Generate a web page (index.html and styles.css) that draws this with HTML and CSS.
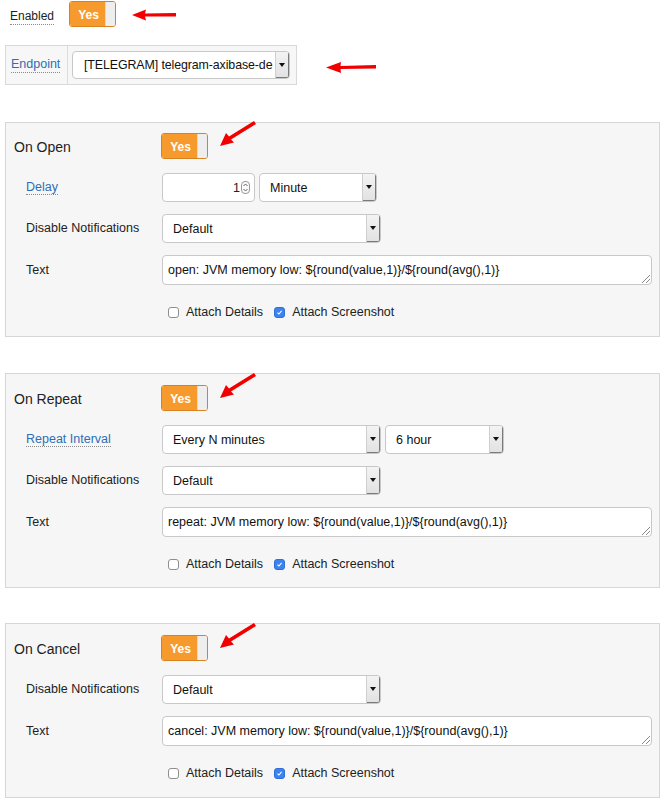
FILE: index.html
```html
<!DOCTYPE html>
<html>
<head>
<meta charset="utf-8">
<link rel="stylesheet" href="styles.css">
</head>
<body>
<div class="page">
  <div class="top-row">
    <span class="lbl-dotted">Enabled</span>
    <span class="toggle"><span class="toggle-on">Yes</span><span class="toggle-knob"></span></span>
    <svg class="arrow-left arrow-a" width="46" height="14" viewBox="0 0 46 14"><path d="M0 7 L14 1.5 L13 5.5 L44 5 L44 8.6 L13 8.6 L14 12.5 Z" fill="#f20000"/></svg>
  </div>

  <div class="endpoint-row">
    <div class="endpoint-box">
      <div class="endpoint-label"><span class="lbl-link">Endpoint</span></div>
      <div class="endpoint-ctrl">
        <div class="select w-endpoint"><span class="sel-text">[TELEGRAM] telegram-axibase-de</span><span class="sel-btn"><i></i></span></div>
      </div>
    </div>
    <svg class="arrow-left arrow-b" width="52" height="14" viewBox="0 0 52 14"><path d="M0 7.5 L15 2 L14.5 6 L50 5 L50 8.6 L14.5 9 L15 13 Z" fill="#f20000"/></svg>
  </div>

  <div class="section s-open">
    <div class="sec-head">
      <span class="sec-title">On Open</span>
      <span class="toggle"><span class="toggle-on">Yes</span><span class="toggle-knob"></span></span>
      <svg class="arrow-diag" width="40" height="30" viewBox="0 0 40 30"><path d="M1 26 L7 13 L10 16.5 L35 1 L37 4 L12 19.5 L15 22.5 Z" fill="#f20000"/></svg>
    </div>
    <div class="row first">
      <span class="row-label"><span class="lbl-link">Delay</span></span>
      <div class="ctrls">
        <div class="numinput"><span class="num">1</span><span class="spin"><svg width="7" height="11" viewBox="0 0 7 11"><path d="M1.5 4 L3.5 2 L5.5 4 M1.5 7 L3.5 9 L5.5 7" fill="none" stroke="#555" stroke-width="0.9"/></svg></span></div>
        <div class="select w-minute"><span class="sel-text">Minute</span><span class="sel-btn"><i></i></span></div>
      </div>
    </div>
    <div class="row">
      <span class="row-label">Disable Notifications</span>
      <div class="ctrls"><div class="select w-default"><span class="sel-text">Default</span><span class="sel-btn"><i></i></span></div></div>
    </div>
    <div class="row">
      <span class="row-label">Text</span>
      <div class="ctrls"><div class="textarea">open: JVM memory low: ${round(value,1)}/${round(avg(),1)}<span class="grip"></span></div></div>
    </div>
    <div class="check-row">
      <span class="cb"></span><span class="cb-label">Attach Details</span>
      <span class="cb checked"><svg width="12" height="12" viewBox="0 0 12 12"><path d="M3.3 6.2 L5.2 8.1 L8.8 3.8" fill="none" stroke="#fff" stroke-width="1.4"/></svg></span><span class="cb-label">Attach Screenshot</span>
    </div>
  </div>

  <div class="section s-repeat">
    <div class="sec-head">
      <span class="sec-title">On Repeat</span>
      <span class="toggle"><span class="toggle-on">Yes</span><span class="toggle-knob"></span></span>
      <svg class="arrow-diag" width="40" height="30" viewBox="0 0 40 30"><path d="M1 26 L7 13 L10 16.5 L35 1 L37 4 L12 19.5 L15 22.5 Z" fill="#f20000"/></svg>
    </div>
    <div class="row first">
      <span class="row-label"><span class="lbl-link">Repeat Interval</span></span>
      <div class="ctrls">
        <div class="select w-default"><span class="sel-text">Every N minutes</span><span class="sel-btn"><i></i></span></div>
        <div class="select w-hour"><span class="sel-text">6 hour</span><span class="sel-btn"><i></i></span></div>
      </div>
    </div>
    <div class="row">
      <span class="row-label">Disable Notifications</span>
      <div class="ctrls"><div class="select w-default"><span class="sel-text">Default</span><span class="sel-btn"><i></i></span></div></div>
    </div>
    <div class="row">
      <span class="row-label">Text</span>
      <div class="ctrls"><div class="textarea">repeat: JVM memory low: ${round(value,1)}/${round(avg(),1)}<span class="grip"></span></div></div>
    </div>
    <div class="check-row">
      <span class="cb"></span><span class="cb-label">Attach Details</span>
      <span class="cb checked"><svg width="12" height="12" viewBox="0 0 12 12"><path d="M3.3 6.2 L5.2 8.1 L8.8 3.8" fill="none" stroke="#fff" stroke-width="1.4"/></svg></span><span class="cb-label">Attach Screenshot</span>
    </div>
  </div>

  <div class="section s-cancel">
    <div class="sec-head">
      <span class="sec-title">On Cancel</span>
      <span class="toggle"><span class="toggle-on">Yes</span><span class="toggle-knob"></span></span>
      <svg class="arrow-diag" width="40" height="30" viewBox="0 0 40 30"><path d="M1 26 L7 13 L10 16.5 L35 1 L37 4 L12 19.5 L15 22.5 Z" fill="#f20000"/></svg>
    </div>
    <div class="row first">
      <span class="row-label">Disable Notifications</span>
      <div class="ctrls"><div class="select w-default"><span class="sel-text">Default</span><span class="sel-btn"><i></i></span></div></div>
    </div>
    <div class="row">
      <span class="row-label">Text</span>
      <div class="ctrls"><div class="textarea">cancel: JVM memory low: ${round(value,1)}/${round(avg(),1)}<span class="grip"></span></div></div>
    </div>
    <div class="check-row">
      <span class="cb"></span><span class="cb-label">Attach Details</span>
      <span class="cb checked"><svg width="12" height="12" viewBox="0 0 12 12"><path d="M3.3 6.2 L5.2 8.1 L8.8 3.8" fill="none" stroke="#fff" stroke-width="1.4"/></svg></span><span class="cb-label">Attach Screenshot</span>
    </div>
  </div>
</div>
</body>
</html>
```

FILE: styles.css
```css
* { box-sizing: border-box; }
html, body { margin: 0; padding: 0; background: #fff; }
body {
  font-family: "Liberation Sans", Arial, sans-serif;
  font-size: 12.5px;
  color: #222;
}
.page { width: 666px; padding-top: 1px; }

.top-row {
  display: flex;
  align-items: center;
  height: 26px;
  padding-left: 10px;
}
.top-row .lbl-dotted {
  display: inline-block;
  font-size: 12px;
  line-height: 16px;
  border-bottom: 1px dotted #8a8a8a;
  margin-right: 15px;
  margin-top: 4px;
}

.toggle {
  display: inline-flex;
  width: 47px;
  height: 26px;
  border: 1px solid #d7821f;
  border-radius: 3px;
  overflow: hidden;
  flex: none;
}
.toggle-on {
  width: 35px;
  background: #f79a2e;
  color: #fff;
  font-weight: bold;
  font-size: 12px;
  display: flex;
  align-items: center;
  justify-content: center;
  padding-left: 2px;
  padding-top: 1px;
}
.toggle-knob {
  flex: 1;
  background: #eeeeee;
  border-left: 1px solid #d9d9d9;
}
.arrow-a { margin-left: 16px; margin-top: 1px; }

.endpoint-row {
  display: flex;
  align-items: center;
  margin-top: 18px;
  padding-left: 5px;
}
.endpoint-box {
  display: flex;
  width: 292px;
  height: 40px;
  border: 1px solid #d9d9d9;
  background: #f7f7f7;
}
.endpoint-label {
  width: 62px;
  border-right: 1px solid #dddddd;
  display: flex;
  align-items: center;
  padding-left: 5px;
}
.endpoint-ctrl {
  display: flex;
  align-items: center;
  padding-left: 4px;
}
.arrow-b { margin-left: 29px; margin-top: 4px; }

.lbl-link {
  color: #2f6db5;
  border-bottom: 1px dotted #8a8a8a;
  line-height: 15px;
}

.select {
  display: flex;
  align-items: center;
  height: 29px;
  background: #fff;
  border: 1px solid #c8c8c8;
  border-radius: 4px;
  overflow: hidden;
  flex: none;
}
.sel-text {
  flex: 1;
  padding-left: 10px;
  white-space: nowrap;
  overflow: hidden;
  font-size: 12.5px;
  color: #111;
}
.sel-btn {
  width: 15px;
  align-self: stretch;
  background: linear-gradient(#f4f4f4, #e2e2e2);
  border-left: 1px solid #cfcfcf;
  border-right: 2px solid #7a7a7a;
  border-bottom: 2px solid #7a7a7a;
  border-radius: 0 3px 3px 0;
  display: flex;
  align-items: center;
  justify-content: center;
  margin: -1px -1px -1px 0;
}
.sel-btn i {
  display: block;
  width: 0; height: 0;
  border-left: 3px solid transparent;
  border-right: 3px solid transparent;
  border-top: 4px solid #111;
  margin-top: 1px;
}
.w-endpoint { width: 218px; height: 28px; }
.w-endpoint .sel-text { padding-left: 11px; font-size: 12.4px; letter-spacing: -0.1px; }
.w-minute { width: 118px; }
.w-default { width: 219px; }
.w-hour { width: 119px; }

.section {
  position: relative;
  margin-left: 5px;
  width: 655px;
  background: #f6f6f6;
  border: 1px solid #d6d6d6;
  padding: 10px 7px 0 8px;
}
.s-open { margin-top: 37px; height: 215px; }
.s-repeat { margin-top: 36px; height: 215px; padding-top: 11px; }
.s-cancel { margin-top: 35px; height: 175px; padding-top: 11px; }

.sec-head {
  display: flex;
  align-items: center;
  height: 26px;
  position: relative;
}
.sec-title {
  width: 147px;
  font-size: 14px;
  color: #222;
  margin-top: 1px;
}
.arrow-diag { position: absolute; left: 205px; top: -13px; }

.row {
  display: flex;
  align-items: center;
  margin-top: 12px;
  min-height: 29px;
}
.row.first { margin-top: 14px; }
.row-label {
  width: 148px;
  padding-left: 12px;
  flex: none;
  margin-top: -1px;
}
.ctrls { display: flex; gap: 4px; align-items: center; }

.numinput {
  width: 93px;
  height: 29px;
  background: #fff;
  border: 1px solid #c8c8c8;
  border-radius: 4px;
  display: flex;
  align-items: center;
  justify-content: flex-end;
  padding-right: 4px;
}
.num { font-size: 12.5px; }
.spin {
  width: 9px; height: 13px;
  border: 1px solid #9a9a9a;
  border-radius: 4px;
  display: flex;
  align-items: center;
  justify-content: center;
  margin-left: 1px;
  background: #fafafa;
}

.textarea {
  position: relative;
  width: 490px;
  height: 30px;
  background: #fff;
  border: 1px solid #c8c8c8;
  border-radius: 4px;
  padding: 7px 5px;
  font-size: 12.5px;
  line-height: 14px;
  color: #111;
  white-space: nowrap;
}
.grip {
  position: absolute;
  right: 1px; bottom: 1px;
  width: 8px; height: 8px;
  background: linear-gradient(135deg, transparent 45%, #888 46%, #888 52%, transparent 53%, transparent 70%, #888 71%, #888 77%, transparent 78%);
}

.check-row {
  display: flex;
  align-items: center;
  height: 18px;
  margin-top: 18px;
  padding-left: 154px;
}
.cb {
  width: 11px; height: 11px;
  border: 1px solid #8e8e8e;
  border-radius: 3px;
  background: #fff;
  display: inline-flex;
  align-items: center;
  justify-content: center;
  flex: none;
}
.cb.checked {
  background: #3b83f0;
  border-color: #2f6fd6;
  margin-left: 11px;
}
.cb.checked svg { width: 11px; height: 11px; }
.cb-label { margin-left: 7px; font-size: 12.5px; }
```
